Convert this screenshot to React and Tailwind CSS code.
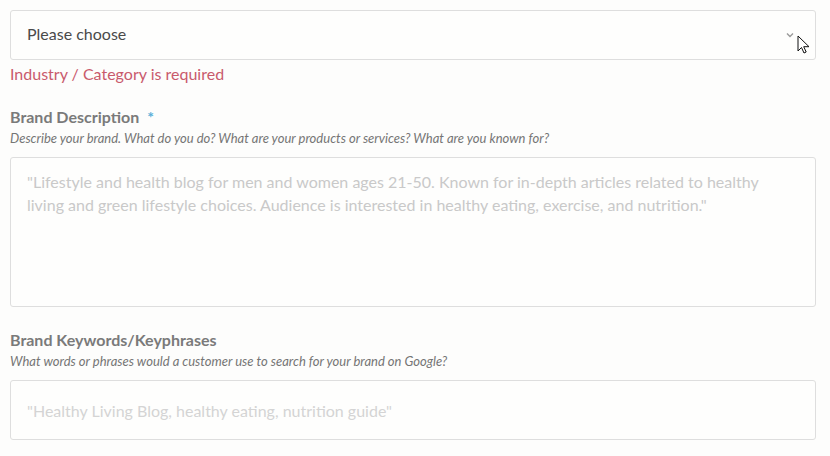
import { useState } from "react";

// Brand form: category select, description, keywords
export default function App() {
  const [category, setCategory] = useState("");
  const [desc, setDesc] = useState("");
  const [keywords, setKeywords] = useState("");

  return (
    <main
      className="relative min-h-[456px] w-[830px] bg-[#fdfdfc] px-[10px] pt-[10px] text-[#444]"
      style={{ fontFamily: "Lato, 'Open Sans', sans-serif" }}
    >
      <div className="relative">
        <select
          value={category}
          onChange={(e) => setCategory(e.target.value)}
          className="h-[50px] w-[806px] appearance-none rounded-[3px] border border-[#dedede] bg-[#fefefd] pb-[2px] pl-4 text-[16px] text-[#4a4a4a] outline-none"
        >
          <option value="">Please choose</option>
        </select>
        <svg
          className="pointer-events-none absolute left-[776px] top-[22px]"
          width="8"
          height="6"
          viewBox="0 0 8 6"
          fill="none"
          stroke="#9a9a9a"
          strokeWidth="1.4"
        >
          <path d="M1 1.5l3 3 3-3" />
        </svg>
      </div>
      <p className="mt-[4px] text-[16px] leading-[20px] text-[#c95a6c]">
        Industry / Category is required
      </p>

      <div className="mt-[23px]">
        <p className="text-[16px] font-bold leading-[20px] text-[#7a7a7a]">
          Brand Description <span className="ml-1 text-[#5aaed8]">*</span>
        </p>
        <p className="mt-[3px] text-[13px] italic leading-[16px] text-[#757575]">
          Describe your brand. What do you do? What are your products or
          services? What are you known for?
        </p>
        <textarea
          value={desc}
          onChange={(e) => setDesc(e.target.value)}
          placeholder={
            '"Lifestyle and health blog for men and women ages 21-50. Known for in-depth articles related to healthy living and green lifestyle choices. Audience is interested in healthy eating, exercise, and nutrition."'
          }
          className="mt-[11px] block h-[150px] w-[806px] resize-none rounded-[3px] border border-[#dedede] bg-[#fefefd] px-4 py-[12px] text-[16px] leading-[23px] text-[#444] outline-none placeholder:text-[#c9c9c9]"
        />
      </div>

      <div className="mt-[23px]">
        <p className="text-[16px] font-bold leading-[20px] text-[#7a7a7a]">
          Brand Keywords/Keyphrases
        </p>
        <p className="mt-[3px] text-[13px] italic leading-[16px] text-[#757575]">
          What words or phrases would a customer use to search for your brand
          on Google?
        </p>
        <input
          value={keywords}
          onChange={(e) => setKeywords(e.target.value)}
          placeholder={'"Healthy Living Blog, healthy eating, nutrition guide"'}
          className="mt-[11px] block h-[60px] w-[806px] rounded-[3px] border border-[#dedede] bg-[#fefefd] px-4 text-[16px] text-[#444] outline-none placeholder:text-[#d4d4d4]"
        />
      </div>

      {/* mouse pointer */}
      <svg
        className="pointer-events-none absolute left-[797px] top-[35px]"
        width="13"
        height="19"
        viewBox="0 0 13 19"
      >
        <path
          d="M1 1v15l3.5-3.5 2.5 5.5 2.2-1-2.5-5.3H12z"
          fill="#fff"
          stroke="#111"
          strokeWidth="1"
          strokeLinejoin="round"
        />
      </svg>
    </main>
  );
}
